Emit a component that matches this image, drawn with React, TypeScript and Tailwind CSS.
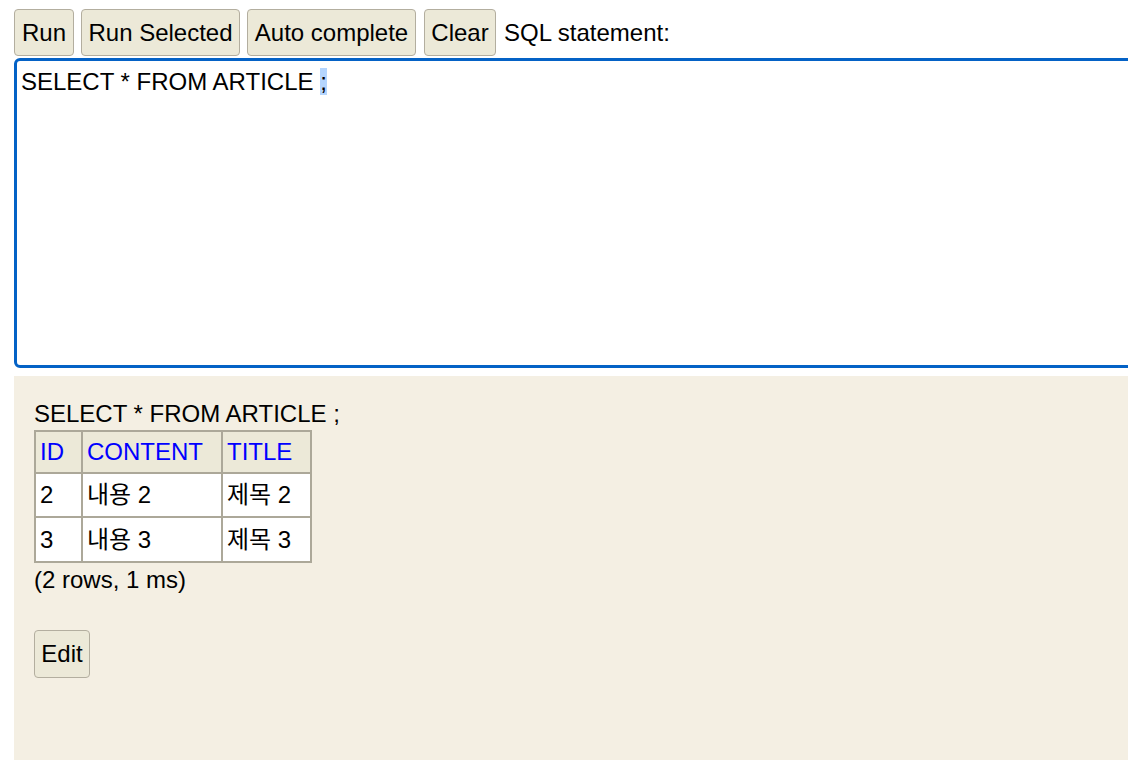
import React from "react";

const btn =
  "h-[47px] px-0 whitespace-nowrap bg-[#ece9d8] border-[1.5px] border-[#b3ae9f] rounded-[4px] text-[24px] leading-none text-black";

export default function App() {
  return (
    <div
      className="w-[1128px] h-[760px] overflow-hidden bg-white text-black"
      style={{ fontFamily: '"Liberation Sans", Arial, "Noto Sans CJK KR", sans-serif' }}
    >
      <div className="flex items-center pl-[14px] pt-[9px] h-[56px]">
        <button className={btn + " w-[60px]"}>Run</button>
        <button className={btn + " ml-[7px] w-[159px]"}>Run Selected</button>
        <button className={btn + " ml-[7px] w-[169px]"}>Auto complete</button>
        <button className={btn + " ml-[8px] w-[72px]"}>Clear</button>
        <span className="ml-[8px] text-[24px] whitespace-nowrap">SQL statement:</span>
      </div>
      <div className="ml-[14px] mt-[2px] w-[1130px] h-[310px] border-[3px] border-[#0462c6] rounded-[6px] bg-white px-[4px] pt-[6px] text-[24px] leading-[30px]">
        SELECT * FROM ARTICLE <span className="bg-[#b4d5fe]">;</span>
      </div>
      <div className="ml-[14px] mt-[8px] h-[400px] bg-[#f4efe3] pl-[20px] pt-[24px] text-[24px]">
        <div className="leading-[28px]">SELECT * FROM ARTICLE ;</div>
        <table className="border-collapse border-2 border-[#aca899] mt-[2px]">
          <thead>
            <tr className="bg-[#ece9d8] h-[42px]">
              <th className="border-2 border-[#aca899] w-[47px] text-left font-normal text-[#0000ff] px-[4px]">ID</th>
              <th className="border-2 border-[#aca899] w-[140px] text-left font-normal text-[#0000ff] px-[4px]">CONTENT</th>
              <th className="border-2 border-[#aca899] w-[89px] text-left font-normal text-[#0000ff] px-[4px]">TITLE</th>
            </tr>
          </thead>
          <tbody className="bg-white">
            <tr className="h-[44px]">
              <td className="border-2 border-[#aca899] px-[4px]">2</td>
              <td className="border-2 border-[#aca899] px-[4px]">내용 2</td>
              <td className="border-2 border-[#aca899] px-[4px]">제목 2</td>
            </tr>
            <tr className="h-[45px]">
              <td className="border-2 border-[#aca899] px-[4px]">3</td>
              <td className="border-2 border-[#aca899] px-[4px]">내용 3</td>
              <td className="border-2 border-[#aca899] px-[4px]">제목 3</td>
            </tr>
          </tbody>
        </table>
        <div className="leading-[34px]">(2 rows, 1 ms)</div>
        <button className="mt-[33px] h-[48px] w-[56px] bg-[#ece9d8] border-[1.5px] border-[#b3ae9f] rounded-[4px] text-[24px] leading-none">
          Edit
        </button>
      </div>
    </div>
  );
}
